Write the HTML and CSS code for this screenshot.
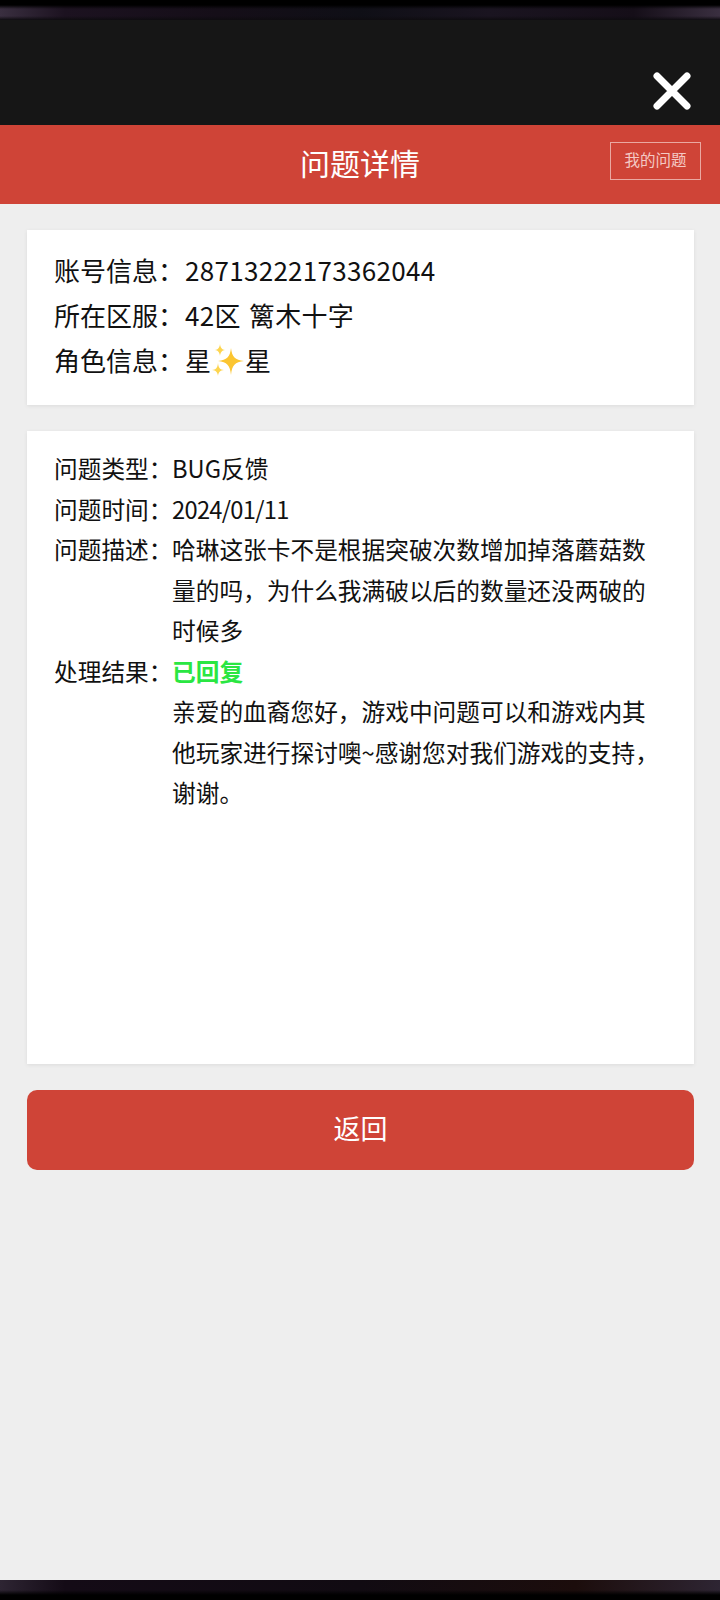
FILE: index.html
```html
<!DOCTYPE html>
<html lang="zh-CN">
<head>
  <meta charset="UTF-8">
  <meta name="viewport" content="width=device-width, initial-scale=1.0">
  <title>问题详情</title>
  <link rel="stylesheet" href="styles.css">
</head>
<body>

  <div class="strip strip-top"></div>

  <!-- Close bar -->
  <div class="close-bar">
    <svg class="close-icon" width="38" height="38" viewBox="0 0 38 38" aria-label="关闭">
      <path d="M4 4 L34 34 M34 4 L4 34" stroke="#fff" stroke-width="7" stroke-linecap="round" fill="none"/>
    </svg>
  </div>

  <div class="page-header">
    <h1 class="page-title">问题详情</h1>
    <a class="my-questions">我的问题</a>
  </div>

  <div class="content">
    <!-- Account -->
    <div class="card account-card">
      <div class="account-row"><span class="account-label">账号信息：</span><span class="digits">28713222173362044</span></div>
      <div class="account-row"><span class="account-label">所在区服：</span><span class="digits">42区 篱木十字</span></div>
      <div class="account-row">
        <span class="account-label">角色信息：</span>
        <span class="role-name">星<svg class="sparkle" width="34" height="34" viewBox="0 0 34 34" aria-hidden="true">
          <path d="M20 5 C21 14 24 17 33 18 C24 19 21 22 20 32 C19 22 16 19 7 18 C16 17 19 14 20 5Z" fill="#fbc531"/>
          <path d="M9 1 C9.500 5 11 6.500 14 7 C11 7.500 9.500 9 9 13 C8.500 9 7 7.500 4 7 C7 6.500 8.500 5 9 1Z" fill="#fdd54f"/>
          <path d="M7 20 C7.500 25 9 26.500 13 27 C9 27.500 7.500 29 7 33 C6.500 29 5 27.500 1 27 C5 26.500 6.500 25 7 20Z" fill="#fdd54f"/>
        </svg>星</span>
      </div>
    </div>

    <!-- Question detail -->
    <div class="card detail-card">
      <div class="detail-row">
        <span class="detail-label">问题类型：</span>
        <div class="detail-value">BUG反馈</div>
      </div>
      <div class="detail-row">
        <span class="detail-label">问题时间：</span>
        <div class="detail-value date">2024/01/11</div>
      </div>
      <div class="detail-row">
        <span class="detail-label">问题描述：</span>
        <div class="detail-value">哈琳这张卡不是根据突破次数增加掉落蘑菇数量的吗，为什么我满破以后的数量还没两破的时候多</div>
      </div>
      <div class="detail-row">
        <span class="detail-label">处理结果：</span>
        <div class="detail-value">
          <div class="status">已回复</div>
          <div>亲爱的血裔您好，游戏中问题可以和游戏内其他玩家进行探讨噢~感谢您对我们游戏的支持，谢谢。</div>
        </div>
      </div>
    </div>

    <button class="back-btn">返回</button>
  </div>

  <div class="strip strip-bottom"></div>

</body>
</html>
```

FILE: styles.css
```css
* {
  box-sizing: border-box;
}
html, body {
  height: 100%;
}
body {
  margin: 0;
  display: flex;
  flex-direction: column;
  min-height: 1600px;
  font-family: "Noto Sans CJK SC", "Noto Sans", sans-serif;
  background-color: #eee;
  color: #111;
}
.strip {
  height: 20px;
  flex-shrink: 0;
  background-color: #050306;
}
.strip-top {
  background-image:
    linear-gradient(180deg, #000 0 5px, transparent 9px, transparent 16px, #0e0c10 20px),
    linear-gradient(90deg, #3a2f40 0, #1c1220 9%, #150e18 30%, #0f0f16 50%, #1a1420 68%, #150e18 88%, #3a2f40 100%);
}
.strip-bottom {
  background-image:
    linear-gradient(180deg, transparent 0, transparent 10px, #000 15px),
    linear-gradient(90deg, #2e2533 0, #140b16 9%, #110b12 50%, #1c0d0c 80%, #2e2533 100%);
}
.close-bar {
  height: 105px;
  flex-shrink: 0;
  background-color: #161616;
  display: flex;
  justify-content: flex-end;
  align-items: flex-end;
  padding: 0 29px 15px 0;
}
.close-icon {
  display: block;
}
.page-header {
  position: relative;
  height: 79px;
  flex-shrink: 0;
  background-color: #cf4437;
  display: flex;
  align-items: center;
  justify-content: center;
  padding-bottom: 6px;
}
.page-title {
  margin: 0;
  font-size: 30px;
  font-weight: 400;
  color: #fff;
}
.my-questions {
  position: absolute;
  right: 19px;
  top: 17px;
  width: 91px;
  height: 38px;
  padding-bottom: 4px;
  border: 1px solid #eaa9a2;
  color: #f4c9c4;
  font-size: 15.500px;
  display: flex;
  align-items: center;
  justify-content: center;
}
.content {
  flex: 1;
  padding: 26px 26px 0 27px;
}
.card {
  background: #fff;
  box-shadow: 0 1px 4px rgba(0, 0, 0, 0.08);
}
.account-card {
  height: 175px;
  padding: 17px 27px 0;
  font-size: 26px;
  line-height: 45px;
}
.account-row {
  display: flex;
  height: 45px;
}
.account-label {
  width: 131px;
  flex-shrink: 0;
}
.digits {
  letter-spacing: 0.3px;
  word-spacing: 2px;
}
.role-name {
  display: flex;
  align-items: center;
}
.sparkle {
  display: block;
}
.detail-card {
  height: 633px;
  margin-top: 26px;
  padding: 17px 30px 0 27px;
  font-size: 23.700px;
  line-height: 40.500px;
}
.detail-row {
  display: flex;
}
.detail-label {
  width: 118px;
  flex-shrink: 0;
  white-space: nowrap;
}
.detail-value {
  flex: 1;
}
.date {
  letter-spacing: -0.7px;
}
.status {
  color: #2ae642;
  font-weight: 700;
}
.back-btn {
  display: block;
  width: 100%;
  height: 80px;
  margin-top: 26px;
  padding-bottom: 6px;
  border: none;
  border-radius: 10px;
  background-color: #cf4437;
  color: #fff;
  font-family: inherit;
  font-size: 27px;
}
```
